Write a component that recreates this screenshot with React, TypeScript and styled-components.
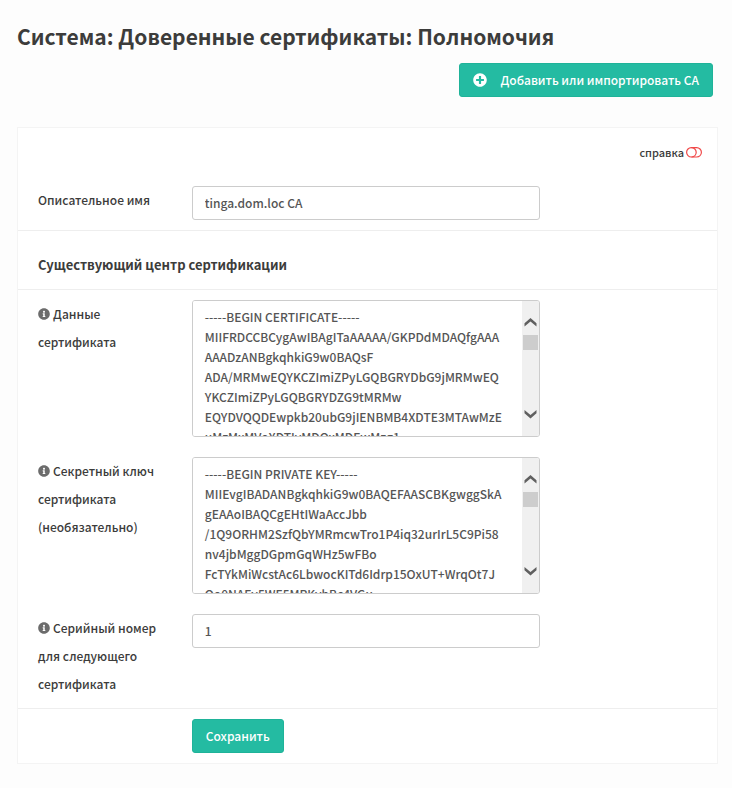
import React from 'react';
import styled, { createGlobalStyle } from 'styled-components';
import { FaInfoCircle, FaPlusCircle } from 'react-icons/fa';

const GlobalStyle = createGlobalStyle`
  * { box-sizing: border-box; }
  body {
    margin: 0;
    background: #fdfdfd;
    color: #3c3c3b;
    font: 500 12px/20px "Noto Sans CJK SC", sans-serif;
  }
`;

const Page = styled.div`
  padding: 22px 14px 24px 17px;
`;

const Header = styled.header`
  display: flex;
  flex-direction: column;
  padding-right: 5px;
  margin-bottom: 30px;
`;

const Title = styled.h1`
  margin: 0 0 13px;
  font-size: 21px;
  line-height: 28px;
  font-weight: 600;
`;

const Button = styled.button`
  display: inline-flex;
  align-items: center;
  gap: 13px;
  height: 34px;
  padding: 0 13px;
  border: 1px solid #1fb399;
  border-radius: 3px;
  background: #24bba2;
  color: #fff;
  font: inherit;
  white-space: nowrap;
  cursor: pointer;
`;

const AddButton = styled(Button)`
  align-self: flex-end;
`;

const Panel = styled.form`
  border: 1px solid #f4f4f4;
  background: #fff;
`;

const HelpRow = styled.div`
  display: flex;
  justify-content: flex-end;
  padding: 14px 15px;
`;

const HelpButton = styled.button`
  display: inline-flex;
  align-items: center;
  gap: 2px;
  padding: 0;
  border: 0;
  background: none;
  color: inherit;
  font: inherit;
  font-size: 11px;
  line-height: 20px;
  cursor: pointer;
`;

const Row = styled.div<{ $divided?: boolean }>`
  display: grid;
  grid-template-columns: 22% minmax(0, 348px);
  column-gap: 20px;
  align-items: start;
  padding: 10px 0;
  border-bottom: ${p => (p.$divided ? '1px solid #eee' : '0')};
`;

const Label = styled.label`
  padding-left: 20px;
  line-height: 28px;

  svg {
    margin-right: 3px;
    color: #6c6c6c;
    vertical-align: -1px;
  }
`;

const Input = styled.input`
  width: 100%;
  height: 34px;
  padding: 0 12px 2px;
  border: 1px solid #ccc;
  border-radius: 3px;
  background: #fff;
  color: #555;
  font: inherit;
`;

const SectionTitle = styled.h2`
  margin: 0;
  padding: 24px 20px 14px;
  border-bottom: 1px solid #eee;
  font-size: 13px;
  line-height: 20px;
  font-weight: 600;
`;

const AreaFrame = styled.div`
  display: flex;
  height: 137px;
  overflow: hidden;
  border: 1px solid #ccc;
  border-radius: 3px;
`;

const Area = styled.textarea`
  flex: 1;
  min-width: 0;
  padding: 6px 0 0 12px;
  border: 0;
  outline: 0;
  resize: none;
  background: #fff;
  color: #555;
  font: inherit;
  line-height: 20px;
  white-space: pre;
  overflow: hidden scroll;
  scrollbar-width: none;
`;

const Track = styled.div`
  display: flex;
  flex-direction: column;
  align-items: center;
  width: 17px;
  padding: 15px 0 16px;
  background: #f0f0f0;
`;

const Thumb = styled.div`
  width: 15px;
  height: 15px;
  margin: 7px 0 auto;
  background: #cdcdcd;
`;

const Arrow = ({ down }: { down?: boolean }) => (
  <svg width="13" height="12" viewBox="0 0 13 12" aria-hidden="true">
    <path d={down ? 'M0.5 2v3.2l6 5.3 6-5.3V2l-6 5z' : 'M0.5 10.5V7.3l6-5.3 6 5.3v3.2l-6-5z'} fill="#606060" />
  </svg>
);

const ToggleIcon = () => (
  <svg width="16" height="11" viewBox="0 0 16 11" fill="none" stroke="#f04848" strokeWidth="1.2" aria-hidden="true">
    <rect x="0.6" y="0.6" width="14.8" height="9.4" rx="4.7" />
    <path d="M5.5 0.6a4.7 4.7 0 0 1 0 9.4" />
  </svg>
);

const CERTIFICATE = `-----BEGIN CERTIFICATE-----
MIIFRDCCBCygAwIBAgITaAAAAA/GKPDdMDAQfgAAA
AAADzANBgkqhkiG9w0BAQsF
ADA/MRMwEQYKCZImiZPyLGQBGRYDbG9jMRMwEQ
YKCZImiZPyLGQBGRYDZG9tMRMw
EQYDVQQDEwpkb20ubG9jIENBMB4XDTE3MTAwMzE
uMzMxMVoXDTIyMDQxMDEwMzg1`;

const PRIVATE_KEY = `-----BEGIN PRIVATE KEY-----
MIIEvgIBADANBgkqhkiG9w0BAQEFAASCBKgwggSkA
gEAAoIBAQCgEHtIWaAccJbb
/1Q9ORHM2SzfQbYMRmcwTro1P4iq32urIrL5C9Pi58
nv4jbMggDGpmGqWHz5wFBo
FcTYkMiWcstAc6LbwocKITd6Idrp15OxUT+WrqOt7J
Qo0NAEv5WE5MRKvhBc4VGu`;

const ScrollArea = ({ id, text }: { id: string; text: string }) => (
  <AreaFrame>
    <Area id={id} defaultValue={text} spellCheck={false} />
    <Track aria-hidden="true">
      <Arrow />
      <Thumb />
      <Arrow down />
    </Track>
  </AreaFrame>
);

export default function App() {
  return (
    <>
      <GlobalStyle />
      <Page>
        <Header>
          <Title>Система: Доверенные сертификаты: Полномочия</Title>
          <AddButton type="button">
            <FaPlusCircle size={14} />
            Добавить или импортировать CA
          </AddButton>
        </Header>
        <Panel onSubmit={e => e.preventDefault()}>
          <HelpRow>
            <HelpButton type="button">
              справка
              <ToggleIcon />
            </HelpButton>
          </HelpRow>
          <Row $divided>
            <Label htmlFor="descr">Описательное имя</Label>
            <Input id="descr" defaultValue="tinga.dom.loc CA" />
          </Row>
          <SectionTitle>Существующий центр сертификации</SectionTitle>
          <Row>
            <Label htmlFor="cert"><FaInfoCircle size={12} />Данные сертификата</Label>
            <ScrollArea id="cert" text={CERTIFICATE} />
          </Row>
          <Row>
            <Label htmlFor="key"><FaInfoCircle size={12} />Секретный ключ сертификата (необязательно)</Label>
            <ScrollArea id="key" text={PRIVATE_KEY} />
          </Row>
          <Row $divided>
            <Label htmlFor="serial"><FaInfoCircle size={12} />Серийный номер для следующего сертификата</Label>
            <Input id="serial" defaultValue="1" />
          </Row>
          <Row>
            <span />
            <div>
              <Button type="submit">Сохранить</Button>
            </div>
          </Row>
        </Panel>
      </Page>
    </>
  );
}
